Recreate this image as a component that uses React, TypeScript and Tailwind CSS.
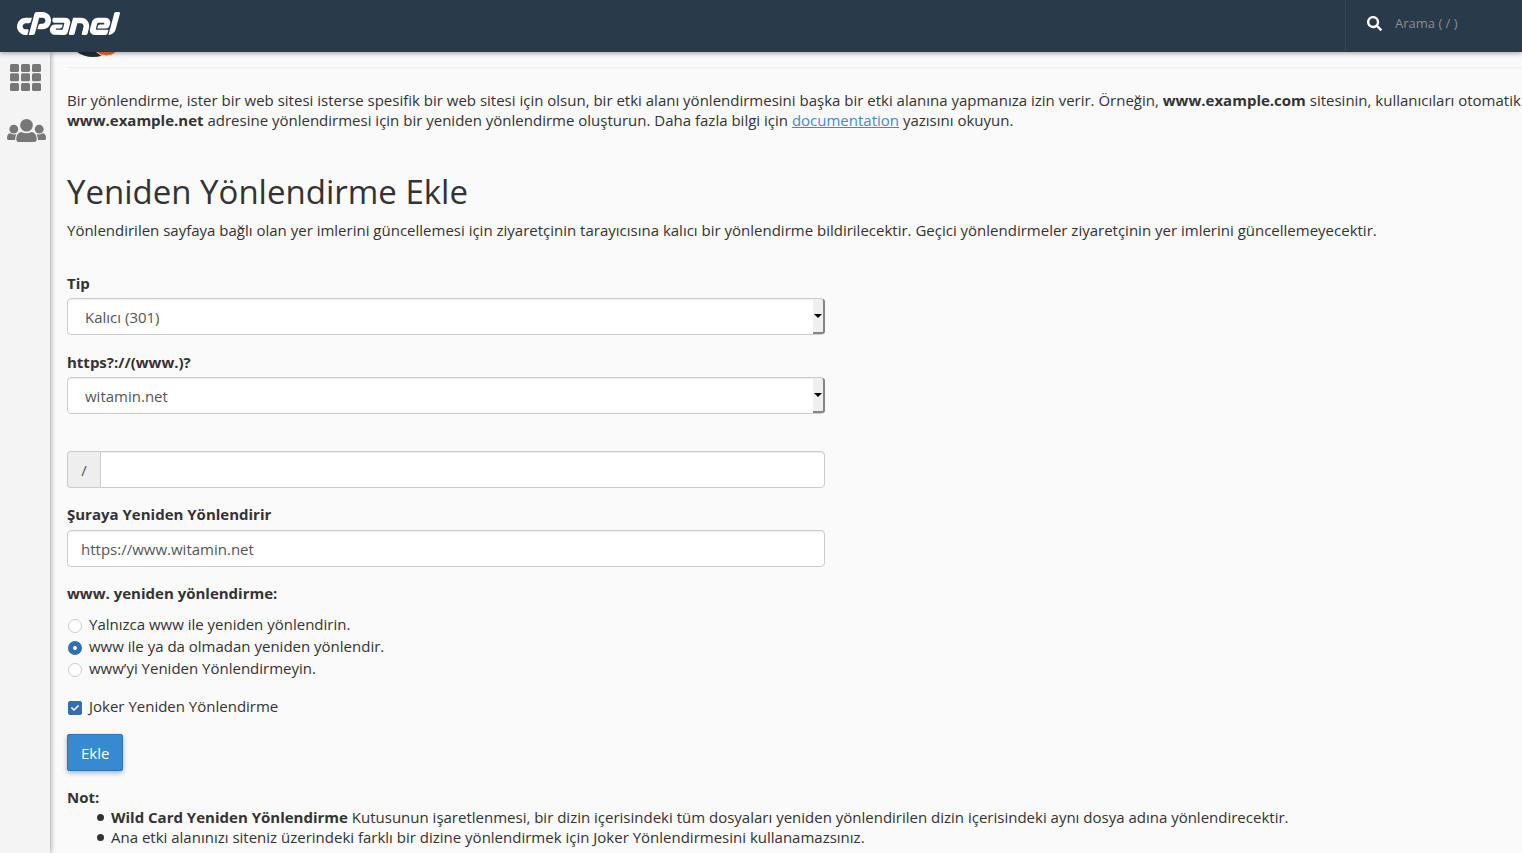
import { FaCheck, FaSearch } from "react-icons/fa";
import { SiCpanel } from "react-icons/si";

const redirectOptions = [
  { value: "only", label: "Yalnızca www ile yeniden yönlendirin." },
  { value: "both", label: "www ile ya da olmadan yeniden yönlendir." },
  { value: "none", label: "www’yi Yeniden Yönlendirmeyin." },
];

const notBullet =
  "before:mr-[7px] before:mb-[2px] before:inline-block before:h-[7px] before:w-[7px] before:rounded-full before:bg-[#333] before:align-middle";

const fieldClass =
  "h-[37px] w-full min-w-0 border border-[#ccc] bg-white text-[15px] text-[#555] shadow-[inset_0_1px_1px_rgba(0,0,0,0.075)] outline-none focus:border-[#66afe9]";

function GridIcon() {
  return (
    <svg width="31" height="27" viewBox="0 0 31 27" fill="currentColor" aria-hidden="true">
      {[0, 9.3, 19].map((y) =>
        [0, 11, 22].map((x) => <rect key={`${x}-${y}`} x={x} y={y} width="9" height="8" rx="1.5" />)
      )}
    </svg>
  );
}

function UsersIcon() {
  return (
    <svg width="39" height="23" viewBox="0 0 39 23" fill="currentColor" aria-hidden="true">
      <circle cx="19.5" cy="6.3" r="6.3" />
      <circle cx="6.8" cy="10.2" r="4.4" />
      <circle cx="32.2" cy="10.2" r="4.4" />
      <path d="M9.3 20.5c0-4 1.8-7.3 5.2-7.5 3 1.6 7 1.6 10 0 3.4.2 5.2 3.5 5.2 7.5 0 1.6-1 2.5-2.5 2.5H11.8c-1.5 0-2.5-.9-2.5-2.5z" />
      <path d="M0 19.2c0-2.6 1-4.6 3-4.9 2.3 1.3 4.3 1.4 6.600.6-1 1.7-1.5 3.6-1.5 6.100H1.700C.6 21 0 20.300 0 19.200z" />
      <path d="M39 19.2c0-2.6-1-4.600-3-4.900-2.300 1.300-4.300 1.400-6.600.6 1 1.700 1.500 3.600 1.500 6.100h6.400c1.100 0 1.700-.7 1.700-1.800z" />
    </svg>
  );
}

function Header() {
  return (
    <header className="relative z-20 flex h-[52px] shrink-0 items-start justify-between bg-[#293a4a] shadow-[0_1px_5px_rgba(0,0,0,0.4)]">
      <a href="#" aria-label="cPanel" className="ml-[17px] flex h-[46px] items-center overflow-hidden text-white">
        <SiCpanel size={103} />
      </a>
      <label className="flex h-[51px] w-[177px] items-start border-l border-[#34475a] pt-[11px] pl-[21px]">
        <FaSearch className="mt-[5px] h-[15px] w-[15px] shrink-0 text-white" />
        <input
          type="search"
          aria-label="Arama"
          placeholder="Arama ( / )"
          className="ml-[13px] h-6 w-full min-w-0 bg-transparent text-[13px] text-white outline-none placeholder:text-[#8d8d8d]"
        />
      </label>
    </header>
  );
}

function Sidebar() {
  return (
    <nav className="z-10 flex w-[50px] shrink-0 flex-col items-start gap-7 bg-[#f4f4f4] pt-3 pl-[7px] text-[#777] shadow-[1px_0_5px_rgba(0,0,0,0.35)]">
      <a href="#" aria-label="Home" className="pl-[3px]">
        <GridIcon />
      </a>
      <a href="#" aria-label="Users">
        <UsersIcon />
      </a>
    </nav>
  );
}

interface SelectFieldProps {
  id: string;
  label: string;
  value: string;
}

function SelectField({ id, label, value }: SelectFieldProps) {
  return (
    <div className="mb-[17px]">
      <label htmlFor={id} className="mb-[5px] block font-bold">
        {label}
      </label>
      <div className="relative">
        <select id={id} className={`${fieldClass} appearance-none rounded-[4px] px-[17px]`}>
          <option>{value}</option>
        </select>
        <span className="pointer-events-none absolute inset-y-px right-0 flex w-[12px] items-center justify-center rounded-r-[3px] border-r-2 border-b-2 border-[#858585] bg-[#efefef]">
          <span className="border-x-4 border-t-4 border-x-transparent border-t-black" />
        </span>
      </div>
    </div>
  );
}

export default function App() {
  return (
    <div className="flex h-screen flex-col overflow-hidden bg-[#fafafa] font-['Open_Sans','Noto_Sans',sans-serif] text-[15px] leading-5 text-[#333]">
      <Header />
      <div className="flex min-h-0 flex-1">
        <Sidebar />
        <main className="min-w-0 flex-1 overflow-hidden pl-[17px]">
          {/* Page icon, scrolled under the header */}
          <div className="h-4 border-b border-[#eee]">
            <svg width="60" height="6" viewBox="0 0 60 6" className="block" aria-hidden="true">
              <ellipse cx="26" cy="-15" rx="24" ry="20" fill="#222f38" />
              <circle cx="39.5" cy="-10.5" r="14.5" fill="#ff6a2e" stroke="#fafafa" strokeWidth="1" />
            </svg>
          </div>

          <p className="mt-[22px] whitespace-nowrap">
            Bir yönlendirme, ister bir web sitesi isterse spesifik bir web sitesi için olsun, bir etki alanı yönlendirmesini
            başka bir etki alanına yapmanıza izin verir. Örneğin, <strong>www.example.com</strong> sitesinin, kullanıcıları
            otomatik olarak
            <br />
            <strong>www.example.net</strong> adresine yönlendirmesi için bir yeniden yönlendirme oluşturun. Daha fazla bilgi
            için{" "}
            <a href="#" className="text-[#428bca] underline">
              documentation
            </a>{" "}
            yazısını okuyun.
          </p>

          <h1 className="mt-[42px] text-[33px] leading-10">Yeniden Yönlendirme Ekle</h1>
          <p className="mt-2">
            Yönlendirilen sayfaya bağlı olan yer imlerini güncellemesi için ziyaretçinin tarayıcısına kalıcı bir
            yönlendirme bildirilecektir. Geçici yönlendirmeler ziyaretçinin yer imlerini güncellemeyecektir.
          </p>

          <form className="mt-[33px]" onSubmit={(e) => e.preventDefault()}>
            <div className="w-[53%] max-w-[758px]">
              <SelectField id="type" label="Tip" value="Kalıcı (301)" />
              <SelectField id="domain" label="https?://(www.)?" value="witamin.net" />

              <div className="mt-[37px] mb-4 flex">
                <label
                  htmlFor="path"
                  className="flex w-[33px] shrink-0 items-center justify-center rounded-l-[4px] border border-r-0 border-[#ccc] bg-[#eee] text-[#555]"
                >
                  /
                </label>
                <input id="path" type="text" className={`${fieldClass} rounded-r-[4px] px-[13px]`} />
              </div>

              <label htmlFor="target" className="mb-[6px] block font-bold">
                Şuraya Yeniden Yönlendirir
              </label>
              <input
                id="target"
                type="text"
                defaultValue="https://www.witamin.net"
                className={`${fieldClass} rounded-[4px] px-[13px]`}
              />
            </div>

            <fieldset className="mt-4">
              <legend className="mb-[10px] font-bold">www. yeniden yönlendirme:</legend>
              {redirectOptions.map((option) => (
                <label key={option.value} className="flex h-[22px] items-center pl-px">
                  <input
                    type="radio"
                    name="www"
                    value={option.value}
                    defaultChecked={option.value === "both"}
                    className="mt-1 mr-[7px] h-[14px] w-[14px] appearance-none rounded-full border border-[#ccc] bg-white checked:border-[5px] checked:border-[#346eac]"
                  />
                  {option.label}
                </label>
              ))}
            </fieldset>

            <label className="mt-4 flex h-[22px] items-center pl-px">
              <span className="relative mt-1 mr-[7px] h-[14px] w-[14px]">
                <input
                  type="checkbox"
                  defaultChecked
                  className="peer block h-[14px] w-[14px] appearance-none rounded-[2px] border border-[#ccc] bg-white checked:border-[#346eac] checked:bg-[#346eac]"
                />
                <FaCheck className="pointer-events-none absolute inset-[3px] hidden h-2 w-2 text-white peer-checked:block" />
              </span>
              Joker Yeniden Yönlendirme
            </label>

            <button
              type="submit"
              className="mt-[17px] block h-[37px] rounded-[2px] border border-[#2a75b8] bg-[#378acf] px-[13px] text-white shadow-[0_2px_5px_rgba(0,0,0,0.3)]"
            >
              Ekle
            </button>
          </form>

          <div className="mt-4">
            <strong>Not:</strong>
            <ul className="pl-[30px]">
              <li className={notBullet}>
                <strong>Wild Card Yeniden Yönlendirme</strong> Kutusunun işaretlenmesi, bir dizin içerisindeki tüm
                dosyaları yeniden yönlendirilen dizin içerisindeki aynı dosya adına yönlendirecektir.
              </li>
              <li className={notBullet}>
                Ana etki alanınızı siteniz üzerindeki farklı bir dizine yönlendirmek için Joker Yönlendirmesini
                kullanamazsınız.
              </li>
            </ul>
          </div>
        </main>
      </div>
    </div>
  );
}
